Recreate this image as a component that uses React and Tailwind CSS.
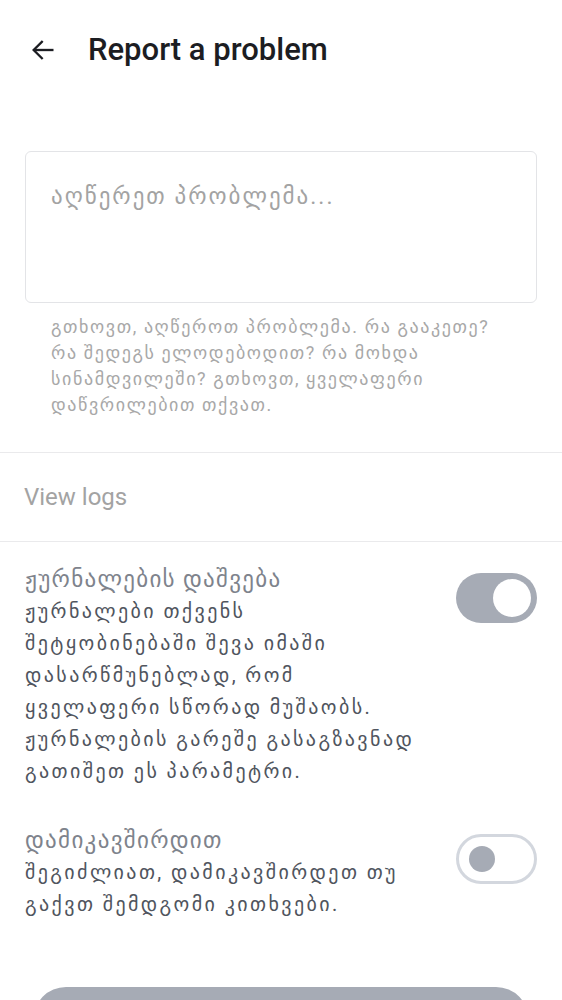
import { useState } from 'react';

const font = { fontFamily: 'Roboto, "DejaVu Sans", sans-serif' };

const Toggle = ({ on, onChange }) => (
  <button
    type="button"
    onClick={onChange}
    className={`flex h-[50px] w-[81px] shrink-0 items-center rounded-full px-[6px] ${on ? 'justify-end bg-[#a6abb5]' : 'justify-start border-[3px] border-[#d3d7de] bg-white px-[10px]'}`}
  >
    {on ? (
      <span className="h-[38px] w-[38px] rounded-full bg-white" />
    ) : (
      <span className="h-[26px] w-[26px] rounded-full bg-[#a6abb5]" />
    )}
  </button>
);

const App = () => {
  const [logs, setLogs] = useState(true);
  const [contact, setContact] = useState(false);
  const [text, setText] = useState('');

  return (
    <div className="min-h-[1000px] bg-white" style={font}>
      {/* Header */}
      <div className="flex h-[100px] items-center px-[29px]">
        <svg width="28" height="28" viewBox="0 0 24 24" fill="none" stroke="#1c1d22" strokeWidth="2" strokeLinecap="square">
          <path d="M20 12H5" />
          <path d="M11 5l-7 7 7 7" strokeLinejoin="miter" />
        </svg>
        <h1 className="ml-[31px] text-[31px] font-medium text-[#1c1d22]">Report a problem</h1>
      </div>

      {/* Description */}
      <div className="px-[25px] pt-[51px]">
        <textarea
          value={text}
          onChange={(e) => setText(e.target.value)}
          placeholder="აღწერეთ პრობლემა..."
          className="block h-[152px] w-full resize-none rounded-[6px] border border-[#e3e4e7] px-[25px] pt-[28px] text-[23px] tracking-[2px] text-[#1c1d22] outline-none placeholder:text-[#a3a3a3]"
        />
        <p className="mt-[11px] pl-[26px] pr-[32px] text-[18px] leading-[26px] tracking-[1.6px] text-[#a8a8a8]">
          გთხოვთ, აღწეროთ პრობლემა. რა გააკეთე? რა შედეგს ელოდებოდით? რა მოხდა სინამდვილეში? გთხოვთ, ყველაფერი დაწვრილებით თქვათ.
        </p>
      </div>

      {/* View logs */}
      <div className="mt-[34px] border-y border-[#eaeaec] px-[24px] py-[27px]">
        <span className="text-[24px] leading-[34px] text-[#a3a3a3]">View logs</span>
      </div>

      {/* Include logs */}
      <div className="flex items-start gap-4 px-[25px] pt-[23px]">
        <div className="w-[390px]">
          <p className="text-[23px] leading-[30px] tracking-[1.3px] text-[#7e838c]">ჟურნალების დაშვება</p>
          <p className="text-[20px] leading-[32px] tracking-[2.4px] text-[#50555e]">
            ჟურნალები თქვენს შეტყობინებაში შევა იმაში დასარწმუნებლად, რომ ყველაფერი სწორად მუშაობს. ჟურნალების გარეშე გასაგზავნად გათიშეთ ეს პარამეტრი.
          </p>
        </div>
        <div className="ml-auto pt-[8px]">
          <Toggle on={logs} onChange={() => setLogs(!logs)} />
        </div>
      </div>

      {/* Contact me */}
      <div className="flex items-start gap-4 px-[25px] pt-[39px]">
        <div className="w-[390px]">
          <p className="text-[23px] leading-[30px] tracking-[1.3px] text-[#7e838c]">დამიკავშირდით</p>
          <p className="text-[20px] leading-[32px] tracking-[2.4px] text-[#50555e]">
            შეგიძლიათ, დამიკავშირდეთ თუ გაქვთ შემდგომი კითხვები.
          </p>
        </div>
        <div className="ml-auto pt-[8px]">
          <Toggle on={contact} onChange={() => setContact(!contact)} />
        </div>
      </div>

      {/* Submit */}
      <div className="px-[33px] pt-[67px] pb-6">
        <button type="button" className="h-[66px] w-full rounded-full bg-[#a6abb5] text-[19px] font-medium text-white">
          Send
        </button>
      </div>
    </div>
  );
};

export default App;
